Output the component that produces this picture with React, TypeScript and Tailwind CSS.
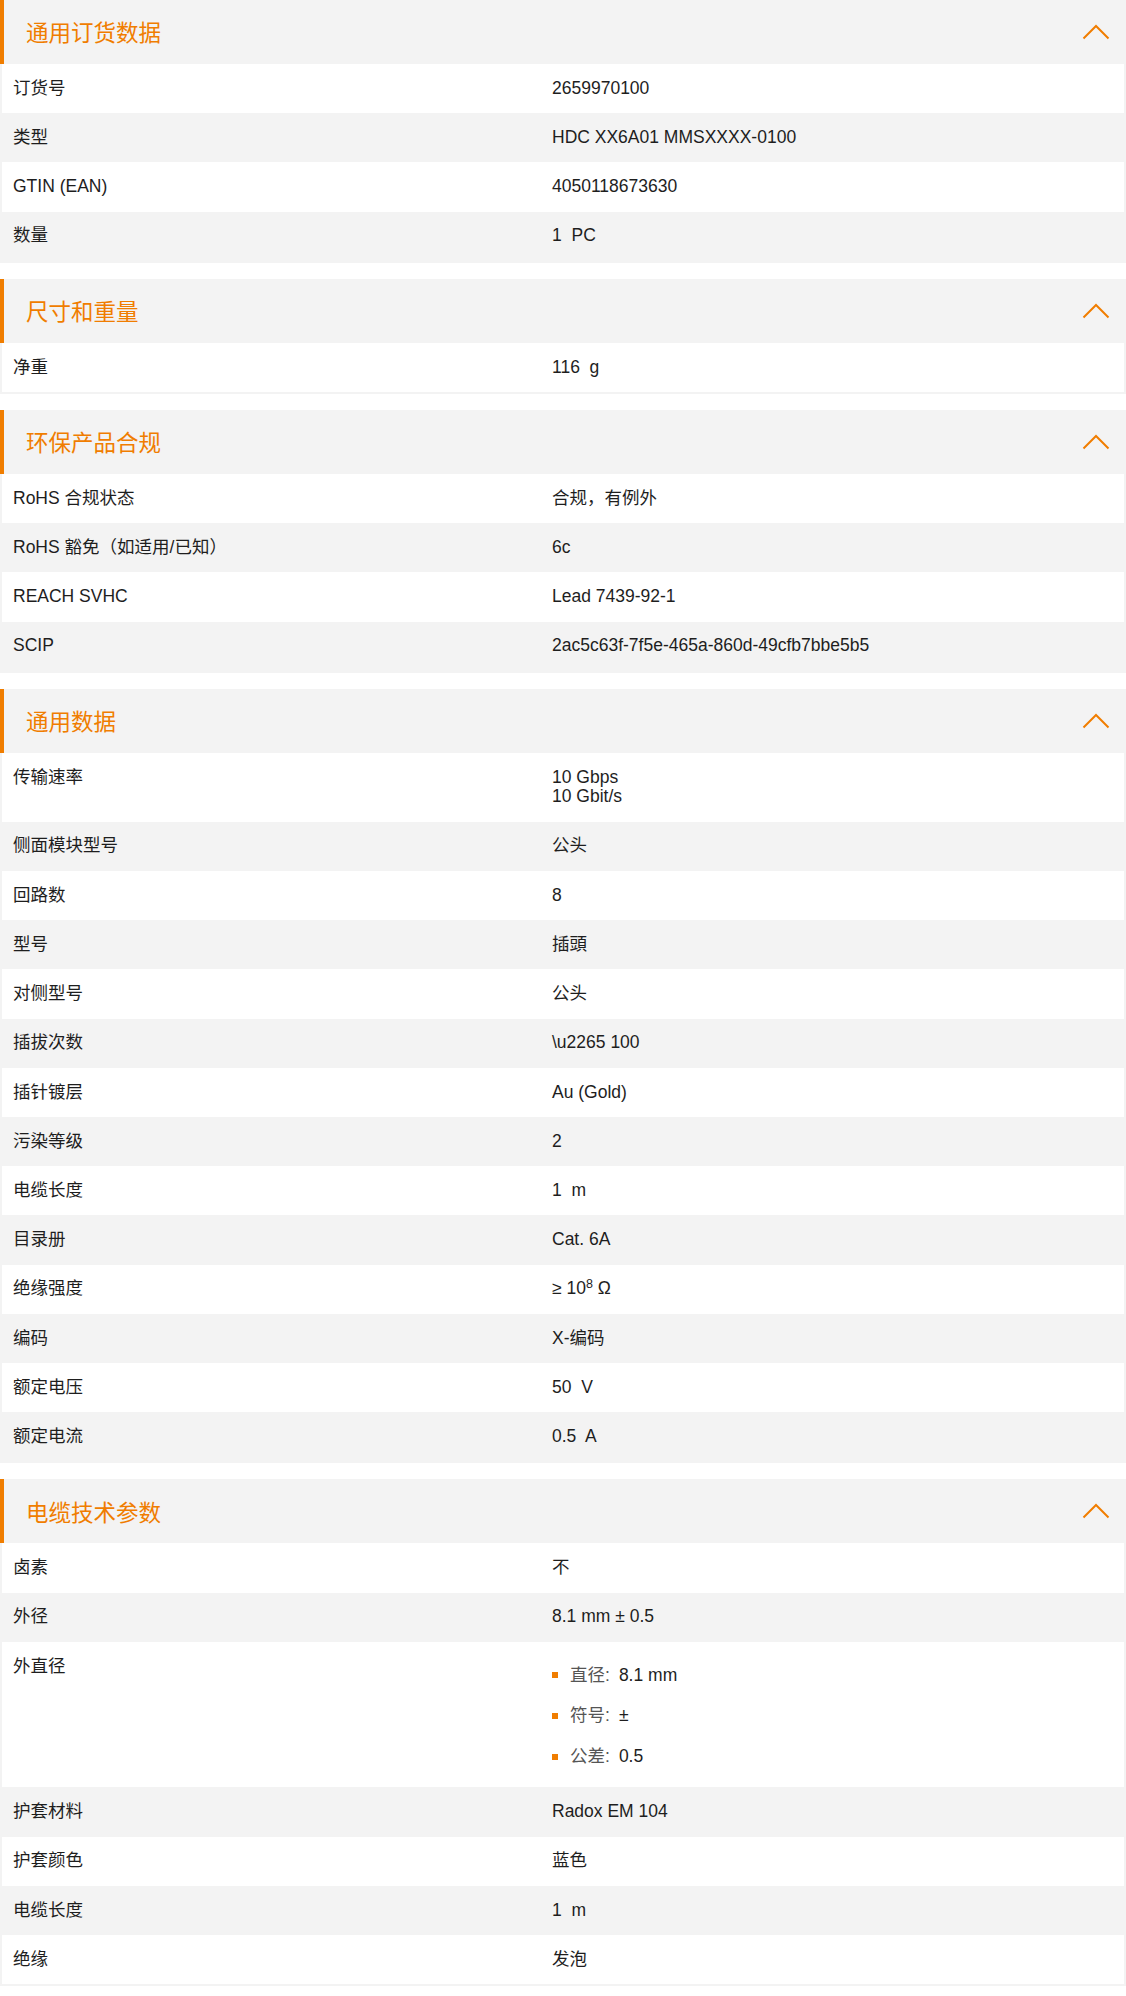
import React from "react";

const ORANGE = "#f07d00";

type Row = { label: string; value: React.ReactNode };

const sp = "\u00a0 ";

const ListItem = ({ k, v }: { k: string; v: string }) => (
  <li className="flex items-center h-[19.7px]">
    <span className="w-[6px] h-[6px] bg-[#f07d00] mr-[12px] shrink-0" />
    <span className="text-[#555555]">{k}:</span>
    <span className="ml-[9px]">{v}</span>
  </li>
);

const sections: { title: string; rows: Row[] }[] = [
  {
    title: "通用订货数据",
    rows: [
      { label: "订货号", value: "2659970100" },
      { label: "类型", value: "HDC XX6A01 MMSXXXX-0100" },
      { label: "GTIN (EAN)", value: "4050118673630" },
      { label: "数量", value: "1" + sp + "PC" },
    ],
  },
  {
    title: "尺寸和重量",
    rows: [{ label: "净重", value: "116" + sp + "g" }],
  },
  {
    title: "环保产品合规",
    rows: [
      { label: "RoHS 合规状态", value: "合规，有例外" },
      { label: "RoHS 豁免（如适用/已知）", value: "6c" },
      { label: "REACH SVHC", value: "Lead 7439-92-1" },
      { label: "SCIP", value: "2ac5c63f-7f5e-465a-860d-49cfb7bbe5b5" },
    ],
  },
  {
    title: "通用数据",
    rows: [
      {
        label: "传输速率",
        value: (
          <>
            <div>10 Gbps</div>
            <div>10 Gbit/s</div>
          </>
        ),
      },
      { label: "侧面模块型号", value: "公头" },
      { label: "回路数", value: "8" },
      { label: "型号", value: "插頭" },
      { label: "对侧型号", value: "公头" },
      { label: "插拔次数", value: "\\u2265 100" },
      { label: "插针镀层", value: "Au (Gold)" },
      { label: "污染等级", value: "2" },
      { label: "电缆长度", value: "1" + sp + "m" },
      { label: "目录册", value: "Cat. 6A" },
      {
        label: "绝缘强度",
        value: (
          <span>
            ≥ 10<sup className="text-[12.5px]">8</sup> Ω
          </span>
        ),
      },
      { label: "编码", value: "X-编码" },
      { label: "额定电压", value: "50" + sp + "V" },
      { label: "额定电流", value: "0.5" + sp + "A" },
    ],
  },
  {
    title: "电缆技术参数",
    rows: [
      { label: "卤素", value: "不" },
      { label: "外径", value: "8.1 mm ± 0.5" },
      {
        label: "外直径",
        value: (
          <ul className="flex flex-col gap-[21px] pt-[9px] pb-[6px]">
            <ListItem k="直径" v="8.1 mm" />
            <ListItem k="符号" v="±" />
            <ListItem k="公差" v="0.5" />
          </ul>
        ),
      },
      { label: "护套材料", value: "Radox EM 104" },
      { label: "护套颜色", value: "蓝色" },
      { label: "电缆长度", value: "1" + sp + "m" },
      { label: "绝缘", value: "发泡" },
    ],
  },
];

const Chevron = () => (
  <svg width="28" height="16" viewBox="0 0 28 16" className="mr-[16px]">
    <polyline
      points="1.5,14.5 14,2 26.5,14.5"
      fill="none"
      stroke={ORANGE}
      strokeWidth="2"
    />
  </svg>
);

export default function App() {
  return (
    <div
      className="w-[1126px] bg-white text-[#1e1e1e] text-[17.5px] leading-[19.7px] pb-[10px]"
      style={{ fontFamily: '"Liberation Sans", "Noto Sans CJK SC", sans-serif' }}
    >
      {sections.map((s, si) => (
        <section key={si} className={"bg-[#f3f3f3] " + (si > 0 ? "mt-[16px]" : "")}>
          <div className="h-[64px] flex items-center justify-between border-l-[4px] border-[#f07d00]">
            <h2
              className="pl-[22px] text-[22.5px] text-[#f07d00] font-normal"
              style={{ fontFamily: '"Noto Sans CJK SC", "Liberation Sans", sans-serif' }}
            >
              {s.title}
            </h2>
            <Chevron />
          </div>
          <div className="px-[2px] pb-[2px]">
            {s.rows.map((r, ri) => (
              <div
                key={ri}
                className={
                  "grid grid-cols-[539px_1fr] py-[14.75px] " +
                  (ri % 2 === 0 ? "bg-white" : "bg-[#f3f3f3]")
                }
              >
                <div className="pl-[11px]">{r.label}</div>
                <div className="pl-[11px] whitespace-pre-wrap">{r.value}</div>
              </div>
            ))}
          </div>
        </section>
      ))}
    </div>
  );
}
